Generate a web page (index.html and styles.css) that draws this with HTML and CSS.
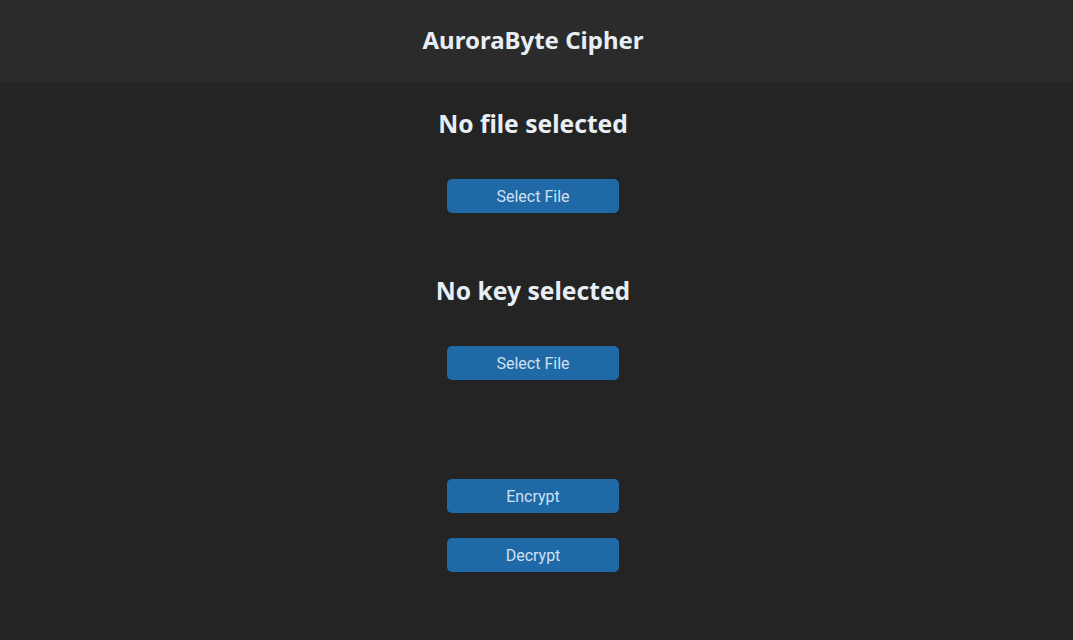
FILE: index.html
```html
<!DOCTYPE html>
<html>
<head>
<meta charset="utf-8">
<link rel="stylesheet" href="styles.css">
</head>
<body>
<header class="topbar"><h1 class="app-title">AuroraByte Cipher</h1></header>
<main class="content">
  <section class="picker">
    <h2 class="status">No file selected</h2>
    <button class="btn">Select File</button>
  </section>
  <section class="picker">
    <h2 class="status">No key selected</h2>
    <button class="btn">Select File</button>
  </section>
  <section class="actions">
    <button class="btn">Encrypt</button>
    <button class="btn">Decrypt</button>
  </section>
</main>
</body>
</html>
```
FILE: styles.css
```css
html, body {
  margin: 0;
  padding: 0;
  background: #242424;
  height: 100%;
}
body {
  font-family: "Noto Sans", sans-serif;
  color: #e8eef5;
}
.topbar {
  height: 82px;
  box-sizing: border-box;
  padding: 0 7px 4px 0;
  background: #2b2b2b;
  display: flex;
  align-items: center;
  justify-content: center;
}
.app-title {
  margin: 0;
  font-size: 24px;
  font-weight: 700;
  color: #e8eef5;
}
.content {
  display: flex;
  flex-direction: column;
  align-items: center;
  padding-right: 7px;
}
.picker {
  display: flex;
  flex-direction: column;
  align-items: center;
}
.status {
  margin: 24px 0 0;
  height: 36px;
  line-height: 36px;
  font-size: 24.6px;
  font-weight: 700;
  color: #e8eef5;
}
.picker .btn {
  margin-top: 37px;
}
.picker + .picker .status {
  margin-top: 60px;
}
.actions {
  margin-top: 99px;
  display: flex;
  flex-direction: column;
  align-items: center;
  gap: 25px;
}
.btn {
  width: 172px;
  height: 34px;
  border: none;
  border-radius: 5px;
  background: #1f69a6;
  color: #cfe0f1;
  font-family: Roboto, sans-serif;
  font-size: 16px;
  cursor: pointer;
}
```
